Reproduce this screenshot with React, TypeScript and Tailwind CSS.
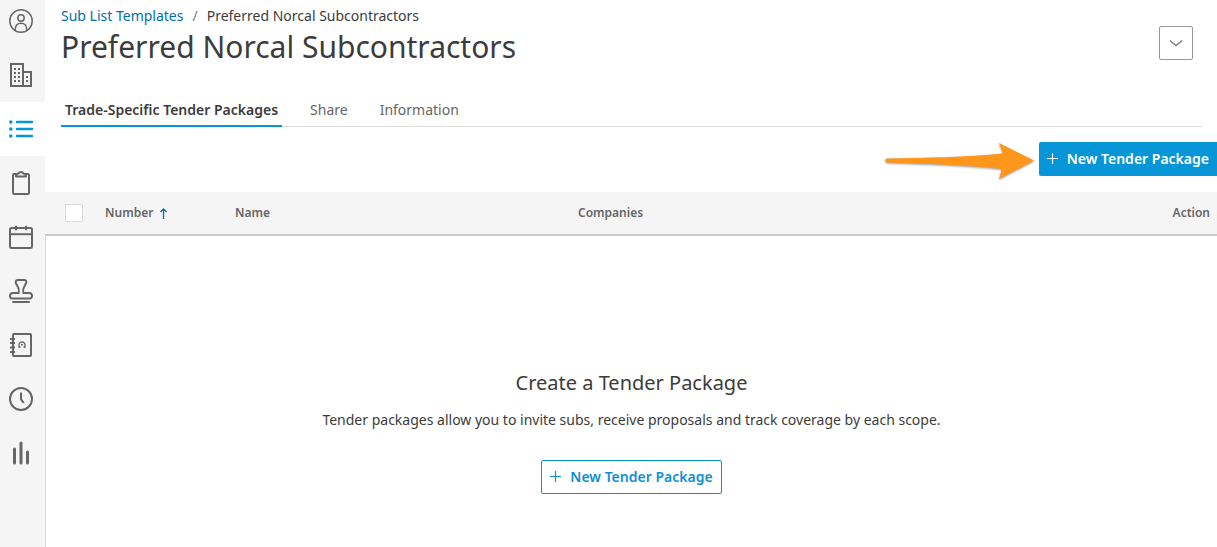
import type { ReactNode } from 'react';

type NavItem = {
  label: string;
  icon: ReactNode;
  active?: boolean;
};

const NAV_ITEMS: NavItem[] = [
  {
    label: 'Account',
    icon: (
      <g strokeWidth="1.5">
        <circle cx="13" cy="13" r="11.2" />
        <circle cx="13" cy="10" r="3.2" />
        <path d="M7.3 22.4v-1.2c0-3.6 2.3-6 5.7-6s5.7 2.4 5.7 6v1.2" />
      </g>
    ),
  },
  {
    label: 'Companies',
    icon: (
      <>
        <path d="M3 2h12v22H3zM15 10h8v14h-8" />
        <path
          d="M7 6v14M11 6v14"
          strokeWidth="2"
          strokeDasharray="2 2"
        />
        <path d="M19 14v6" strokeWidth="2" strokeDasharray="2 2" />
      </>
    ),
  },
  {
    label: 'Sub list templates',
    active: true,
    icon: (
      <>
        <path d="M9 6h15M9 13h15M9 20h15" strokeWidth="2.4" strokeLinecap="round" />
        <g fill="currentColor" stroke="none">
          <circle cx="2.8" cy="6" r="1.8" />
          <circle cx="2.8" cy="13" r="1.8" />
          <circle cx="2.8" cy="20" r="1.8" />
        </g>
      </>
    ),
  },
  {
    label: 'Projects',
    icon: (
      <>
        <path d="M8.5 4H6.2C5.4 4 5 4.5 5 5.2v17.6c0 .8.4 1.2 1.2 1.2h13.6c.8 0 1.2-.4 1.2-1.2V5.2c0-.7-.4-1.2-1.2-1.2h-2.3" />
        <path d="M8 6.6c0-2 .9-3 2.6-3 .4-1.2 1.2-1.6 2.4-1.6s2 .4 2.4 1.6c1.7 0 2.6 1 2.6 3z" strokeLinejoin="round" />
      </>
    ),
  },
  {
    label: 'Calendar',
    icon: (
      <>
        <rect x="2" y="4" width="22" height="20" rx="1.5" />
        <path d="M2 10.2h22" />
        <path d="M8 1.8v4.4M18 1.8v4.4" />
      </>
    ),
  },
  {
    label: 'Approvals',
    icon: (
      <>
        <path
          d="M10.7 15c.6-2.500.3-4.500-1-6.500L7.900 5.200C7.200 3.400 8 2 9.800 2h6.400c1.800 0 2.600 1.400 1.900 3.200L16.300 8.500c-1.300 2-1.600 4-1 6.500H21c2 0 3 1.300 3 2.800s-.8 2.700-2.300 2.700H4.300C2.800 20.500 2 19.300 2 17.800S3 15 5 15z"
          strokeLinejoin="round"
        />
        <path d="M5 24h16" strokeLinecap="round" />
      </>
    ),
  },
  {
    label: 'Contacts',
    icon: (
      <>
        <rect x="5" y="2" width="18" height="22" rx="1" />
        <path d="M2 7h5M2 11h5M2 15.500h5M2 20h5" />
        <path d="M11.500 15.500c-1.500-3.400.1-5.500 2.500-5.500s4 2.100 2.500 5.500" strokeWidth="1.400" />
        <path d="M10.500 15h2M15.500 15h2M13 12.800h2" strokeWidth="1.400" />
      </>
    ),
  },
  {
    label: 'History',
    icon: (
      <>
        <circle cx="13" cy="13" r="11" />
        <path d="M13 6.500v7l2.800 3.300" />
      </>
    ),
  },
  {
    label: 'Reports',
    icon: (
      <path d="M6.500 9v14M13 3v20M19.500 12v11" strokeWidth="3" strokeLinecap="round" />
    ),
  },
];

const TABS = ['Share', 'Information'];

function Sidebar() {
  return (
    <nav aria-label="Main" className="w-[45px] shrink-0 bg-[#f5f5f5]">
      {NAV_ITEMS.map((item, index) => (
        <a
          key={item.label}
          href="#"
          aria-label={item.label}
          className={
            item.active
              ? 'flex h-[54px] items-center bg-white pl-2 text-[#0696d7]'
              : index === 0
                ? 'flex h-12 items-center pb-1.5 pl-2 text-[#666]'
                : 'flex h-[54px] items-center pl-2 text-[#666]'
          }
        >
          <svg
            viewBox="0 0 26 26"
            className="size-[26px]"
            fill="none"
            stroke="currentColor"
            strokeWidth="2"
          >
            {item.icon}
          </svg>
        </a>
      ))}
    </nav>
  );
}

function PlusIcon() {
  return (
    <svg viewBox="0 0 12 12" className="size-3" fill="none" stroke="currentColor">
      <path d="M5.500 0v11M0 5.500h11" strokeWidth="1.200" />
    </svg>
  );
}

function PageHeader() {
  return (
    <header className="flex items-start justify-between pr-6 pl-4">
      <div>
        <div className="flex gap-[9px] pt-1.5 text-sm leading-5">
          <a href="#" className="text-[#006eaf]">
            Sub List Templates
          </a>
          <span className="text-[#808080]">/</span>
          <span>Preferred Norcal Subcontractors</span>
        </div>
        <h1 className="text-[30px] leading-[42px]">Preferred Norcal Subcontractors</h1>
      </div>
      <button
        type="button"
        aria-label="More actions"
        className="mt-[26px] flex size-[34px] items-center justify-center rounded-xs border border-[#999] text-[#808080]"
      >
        <svg viewBox="0 0 14 8" className="h-2 w-3.5" fill="none" stroke="currentColor">
          <path d="M1 1.500l6 5 6-5" strokeWidth="1.500" />
        </svg>
      </button>
    </header>
  );
}

function Tabs() {
  return (
    <div role="tablist" className="mt-[26px] mr-[15px] ml-4 flex gap-6 border-b border-[#dcdcdc] text-sm">
      <button
        type="button"
        role="tab"
        aria-selected="true"
        className="-mb-px h-[33px] border-b-2 border-[#0696d7] px-1 font-semibold"
      >
        Trade-Specific Tender Packages
      </button>
      {TABS.map((tab) => (
        <button
          key={tab}
          type="button"
          role="tab"
          aria-selected="false"
          className="-mb-px h-[33px] border-b-2 border-transparent px-1 text-[#666]"
        >
          {tab}
        </button>
      ))}
    </div>
  );
}

function Toolbar() {
  return (
    <div className="flex h-[65px] items-start justify-end gap-1 pt-[15px]">
      <svg
        viewBox="0 0 152 40"
        className="h-10 w-[152px] drop-shadow-[0_1px_1px_rgba(0,0,0,0.4)]"
        fill="#ff961b"
        aria-hidden="true"
      >
        <path d="M4.500 16.500C43 16 83 15 120 11.500L116 1 151 18.500 116 37 119 27C83 23 43 21.500 4.500 20.500 1.500 20 1.500 17 4.500 16.500z" />
      </svg>
      <button
        type="button"
        className="flex h-[34px] items-center gap-2 rounded-l-xs bg-[#0696d7] px-2 text-sm font-semibold text-white"
      >
        <PlusIcon />
        New Tender Package
      </button>
    </div>
  );
}

function PackagesTable() {
  return (
    <table className="w-full table-fixed bg-[#f5f5f5] text-left text-xs text-[#666]">
      <thead>
        <tr className="h-[43px] border-b-2 border-[#cbcbcb]">
          <th className="w-[60px] pl-5">
            <input
              type="checkbox"
              aria-label="Select all packages"
              className="block size-[18px] appearance-none border border-[#dcdcdc] bg-white"
            />
          </th>
          <th className="w-[130px] font-semibold">
            <button type="button" className="flex items-center gap-1.5">
              Number
              <svg viewBox="0 0 9 11" className="h-[11px] w-[9px] text-[#006eaf]" fill="none" stroke="currentColor">
                <path d="M4.500 11V1M1.500 4l3-3 3 3" strokeWidth="1.300" />
              </svg>
            </button>
          </th>
          <th className="w-[343px] font-semibold">Name</th>
          <th className="font-semibold">Companies</th>
          <th className="w-24 pr-[7px] text-right font-semibold">Action</th>
        </tr>
      </thead>
    </table>
  );
}

function EmptyState() {
  return (
    <section className="flex grow flex-col items-center border-l border-[#dcdcdc] px-4 pt-[132px] pb-10 text-center">
      <h2 className="text-xl leading-[30px]">Create a Tender Package</h2>
      <p className="mt-3 text-sm leading-5">
        Tender packages allow you to invite subs, receive proposals and track coverage by each scope.
      </p>
      <button
        type="button"
        className="mt-[30px] flex h-[34px] items-center gap-2 rounded-xs border border-[#0696d7] px-2 text-sm font-semibold text-[#0e8fd3]"
      >
        <PlusIcon />
        New Tender Package
      </button>
    </section>
  );
}

export default function App() {
  return (
    <div className="flex min-h-screen bg-white font-['Noto_Sans',sans-serif] text-[#3c3c3c]">
      <Sidebar />
      <main className="flex min-w-0 grow flex-col">
        <PageHeader />
        <Tabs />
        <Toolbar />
        <PackagesTable />
        <EmptyState />
      </main>
    </div>
  );
}
